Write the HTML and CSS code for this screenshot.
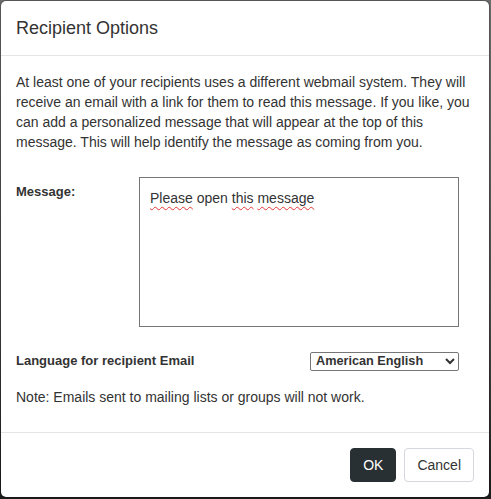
FILE: index.html
```
<!DOCTYPE html>
<html>
<head>
<meta charset="utf-8">
<link rel="stylesheet" href="styles.css">
</head>
<body>
<div class="modal">
  <div class="modal-header">
    <h4 class="modal-title">Recipient Options</h4>
  </div>
  <div class="modal-body">
    <p class="intro">At least one of your recipients uses a different webmail system. They will receive an email with a link for them to read this message. If you like, you can add a personalized message that will appear at the top of this message. This will help identify the message as coming from you.</p>
    <div class="row message-row">
      <label class="label msg-label">Message:</label>
      <div class="textbox"><span class="sp">Please</span> open <span class="sp">this</span> <span class="sp">message</span></div>
    </div>
    <div class="row lang-row">
      <label class="label lang-label">Language for recipient Email</label>
      <select class="lang-select">
        <option>American English</option>
      </select>
    </div>
    <p class="note">Note: Emails sent to mailing lists or groups will not work.</p>
  </div>
  <div class="modal-footer">
    <button class="btn btn-ok">OK</button>
    <button class="btn btn-cancel">Cancel</button>
  </div>
</div>
</body>
</html>
```
FILE: styles.css
```
html, body {
  margin: 0;
  padding: 0;
  height: 499px;
  overflow: hidden;
}
body {
  background: linear-gradient(#6c6c6c, #4a4a4a 60%, #1c1c1c);
  font-family: "Liberation Sans", Arial, sans-serif;
  font-size: 14px;
  line-height: 20px;
  color: #333;
}
.modal {
  width: 490px;
  box-sizing: border-box;
  background: #fff;
  border: 1px solid rgba(0,0,0,.2);
  border-radius: 6px;
  background-clip: padding-box;
}
.modal-header {
  padding: 15px;
  border-bottom: 1px solid #e5e5e5;
}
.modal-title {
  margin: 0;
  font-size: 18px;
  font-weight: normal;
  line-height: 24px;
}
.modal-body {
  padding: 15px;
}
.intro {
  margin: 1px 0 0;
}
.row {
  display: flex;
}
.message-row {
  margin-top: 25px;
  align-items: flex-start;
}
.label {
  font-weight: bold;
  font-size: 13px;
}
.msg-label {
  width: 123px;
  flex: none;
  padding-top: 5px;
}
.textbox {
  width: 320px;
  height: 150px;
  box-sizing: border-box;
  border: 1px solid #767676;
  padding: 10px;
  color: #333;
}
.sp {
  text-decoration: underline wavy #e53935;
  text-decoration-thickness: 1px;
  text-underline-offset: 3px;
}
.lang-row {
  margin-top: 24px;
  align-items: center;
  height: 20px;
}
.lang-label {
  flex: 1;
}
.lang-select {
  width: 149px;
  height: 19px;
  margin-right: 15px;
  font-family: "Liberation Sans", Arial, sans-serif;
  font-size: 12.7px;
  font-weight: bold;
  color: #333;
  border: 1px solid #767676;
  border-radius: 2px;
  background: #fff;
  padding: 0 1px;
}
.note {
  margin: 16px 0 10px;
}
.modal-footer {
  padding: 15px;
  border-top: 1px solid #e5e5e5;
  display: flex;
  justify-content: flex-end;
  gap: 8px;
}
.btn {
  font-family: "Liberation Sans", Arial, sans-serif;
  font-size: 14px;
  line-height: 20px;
  padding: 6px 12px;
  border-radius: 4px;
  border: 1px solid transparent;
  cursor: pointer;
}
.btn-ok {
  background: #283034;
  border-color: #283034;
  color: #fff;
}
.btn-cancel {
  background: #fff;
  border-color: #d5d8dc;
  color: #333;
}
```
